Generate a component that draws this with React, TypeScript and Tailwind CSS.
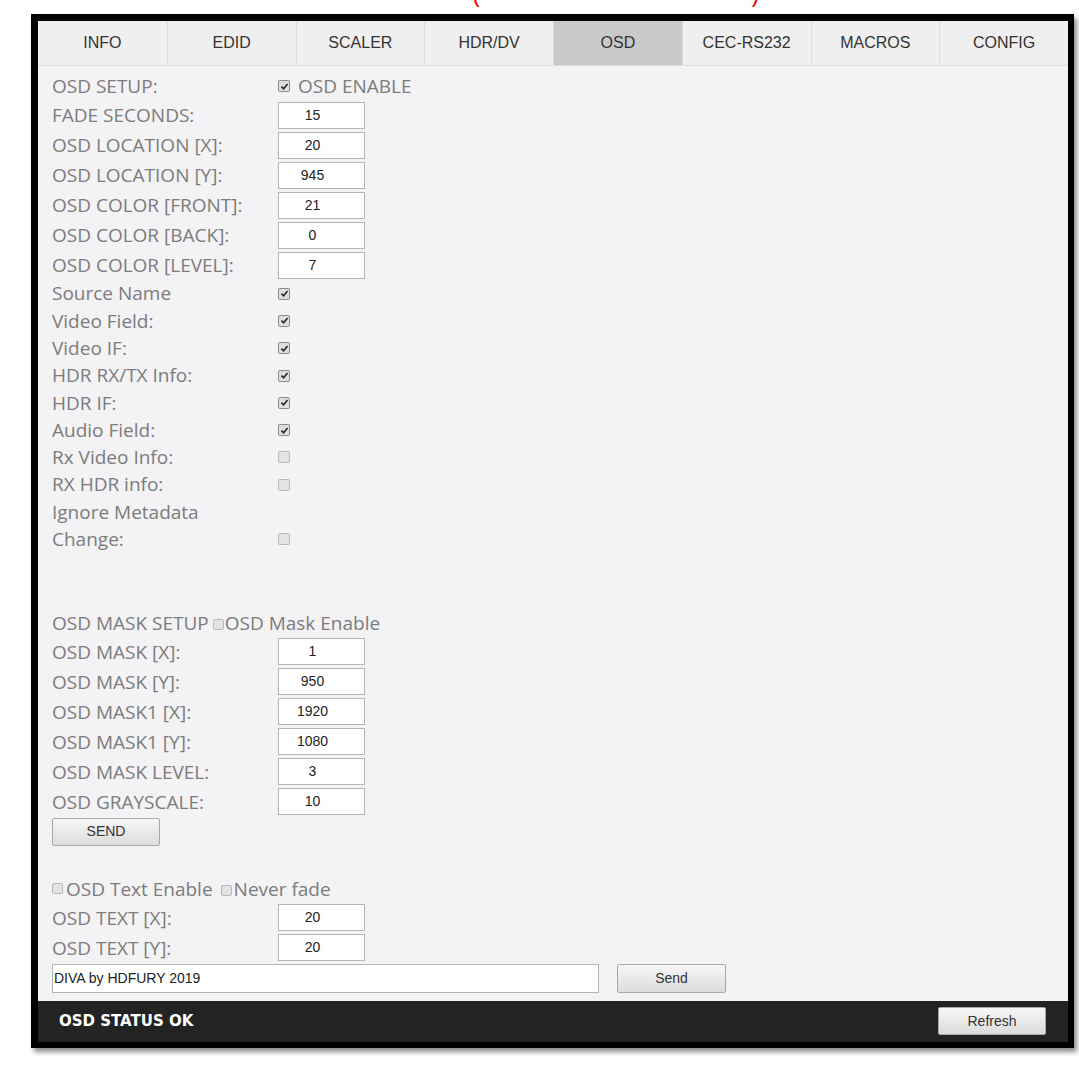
import type { ReactNode } from 'react'

const tabs = ['INFO', 'EDID', 'SCALER', 'HDR/DV', 'OSD', 'CEC-RS232', 'MACROS', 'CONFIG']

const setupFields: [string, string][] = [
  ['FADE SECONDS:', '15'],
  ['OSD LOCATION [X]:', '20'],
  ['OSD LOCATION [Y]:', '945'],
  ['OSD COLOR [FRONT]:', '21'],
  ['OSD COLOR [BACK]:', '0'],
  ['OSD COLOR [LEVEL]:', '7'],
]

const displayFlags: [string, boolean][] = [
  ['Source Name', true],
  ['Video Field:', true],
  ['Video IF:', true],
  ['HDR RX/TX Info:', true],
  ['HDR IF:', true],
  ['Audio Field:', true],
  ['Rx Video Info:', false],
  ['RX HDR info:', false],
  ['Ignore Metadata', false],
  ['Change:', false],
]

const maskFields: [string, string][] = [
  ['OSD MASK [X]:', '1'],
  ['OSD MASK [Y]:', '950'],
  ['OSD MASK1 [X]:', '1920'],
  ['OSD MASK1 [Y]:', '1080'],
  ['OSD MASK LEVEL:', '3'],
  ['OSD GRAYSCALE:', '10'],
]

const textFields: [string, string][] = [
  ['OSD TEXT [X]:', '20'],
  ['OSD TEXT [Y]:', '20'],
]

function Check({ checked, small }: { checked?: boolean; small?: boolean }) {
  return (
    <span
      className={`inline-flex shrink-0 items-center justify-center rounded-[2px] border ${
        small ? 'w-[11px] h-[11px]' : 'w-[12px] h-[12px]'
      } ${checked ? 'border-[#8c8c8c] bg-[#dedede]' : 'border-[#b9b9b9] bg-[#e4e4e4]'}`}
    >
      {checked && (
        <svg viewBox="0 0 10 10" className="w-[9px] h-[9px]">
          <path d="M1.6 5.2 L4 7.6 L8.4 2.2" fill="none" stroke="#2b2b2b" strokeWidth="1.9" />
        </svg>
      )}
    </span>
  )
}

function Box({ value }: { value: string }) {
  return (
    <div className="w-[87px] h-[27px] bg-white border border-[#b4b4b4] flex items-center justify-center pr-[18px] font-['Liberation_Sans',Arial,sans-serif] text-[14px] text-[#222]">
      {value}
    </div>
  )
}

function FieldRow({ label, children }: { label: string; children: ReactNode }) {
  return (
    <div className="flex items-center h-[30px]">
      <span className="w-[226px] shrink-0">{label}</span>
      {children}
    </div>
  )
}

function Button({ label, className }: { label: string; className: string }) {
  return (
    <div
      className={`flex items-center justify-center rounded-[2px] border border-[#a8a8a8] bg-gradient-to-b from-[#f7f7f7] to-[#dcdcdc] font-['Liberation_Sans',Arial,sans-serif] text-[14px] text-[#333] ${className}`}
    >
      {label}
    </div>
  )
}

export default function App() {
  return (
    <div className="w-[1079px] h-[1068px] bg-white overflow-hidden">
      {/* clipped heading above the panel */}
      <div className="h-[14px] overflow-hidden">
        <div className="flex h-[7px] overflow-hidden font-['Liberation_Sans',Arial,sans-serif] text-[26px] leading-[26px] text-[#e01010]">
          <span className="ml-[472px] -mt-[19px]">(</span>
          <span className="ml-[270px] -mt-[19px]">)</span>
        </div>
      </div>

      <div className="ml-[31px] w-[1043px] border-black border-t-[7px] border-l-[7px] border-r-[6px] border-b-[6px] shadow-[3px_4px_5px_rgba(0,0,0,0.45)]">
        <div className="grid grid-cols-8 h-[45px] bg-[#efefef] border-b border-[#dcdcdc] font-['Liberation_Sans',Arial,sans-serif] text-[16px] text-[#333]">
          {tabs.map((t, i) => (
            <div
              key={t}
              className={`flex items-center justify-center ${i > 0 ? 'border-l border-[#dddddd]' : ''} ${
                t === 'OSD' ? 'bg-[#c9c9c9]' : ''
              }`}
            >
              {t}
            </div>
          ))}
        </div>

        <div className="bg-[#f3f2f4] pl-[14px] pt-[6px] pb-[8px] font-['Open_Sans','Noto_Sans',sans-serif] text-[19px] text-[#7c7c7c]">
          <div className="flex items-center h-[28px]">
            <span className="w-[226px] shrink-0">OSD SETUP:</span>
            <Check checked />
            <span className="ml-[8px]">OSD ENABLE</span>
          </div>
          {setupFields.map(([label, value]) => (
            <FieldRow key={label} label={label}>
              <Box value={value} />
            </FieldRow>
          ))}
          {displayFlags.map(([label, on]) => (
            <div key={label} className="flex items-center h-[27.3px]">
              <span className="w-[226px] shrink-0">{label}</span>
              {label !== 'Ignore Metadata' && <Check checked={on} />}
            </div>
          ))}

          <div className="flex items-center h-[28px] mt-[56px]">
            <span>OSD MASK SETUP</span>
            <span className="ml-[4px]">
              <Check small />
            </span>
            <span className="ml-[1px]">OSD Mask Enable</span>
          </div>
          {maskFields.map(([label, value]) => (
            <FieldRow key={label} label={label}>
              <Box value={value} />
            </FieldRow>
          ))}
          <Button label="SEND" className="mt-[1px] w-[108px] h-[28px]" />

          <div className="flex items-center h-[28px] mt-[29px]">
            <Check small />
            <span className="ml-[3px]">OSD Text Enable</span>
            <span className="ml-[8px]">
              <Check small />
            </span>
            <span className="ml-[2px]">Never fade</span>
          </div>
          {textFields.map(([label, value]) => (
            <FieldRow key={label} label={label}>
              <Box value={value} />
            </FieldRow>
          ))}
          <div className="flex items-center mt-[1px] h-[29px]">
            <div className="w-[547px] h-[29px] bg-white border border-[#b4b4b4] flex items-center pl-[1px] font-['Liberation_Sans',Arial,sans-serif] text-[14px] text-[#222]">
              DIVA by HDFURY 2019
            </div>
            <Button label="Send" className="ml-[18px] w-[109px] h-[29px]" />
          </div>
        </div>

        <div className="flex items-center justify-between h-[41px] bg-[#232323] pl-[21px] pr-[22px]">
          <span className="font-['DejaVu_Sans',Verdana,sans-serif] font-bold text-[15px] text-white">
            OSD STATUS OK
          </span>
          <Button label="Refresh" className="w-[108px] h-[28px]" />
        </div>
      </div>
    </div>
  )
}
